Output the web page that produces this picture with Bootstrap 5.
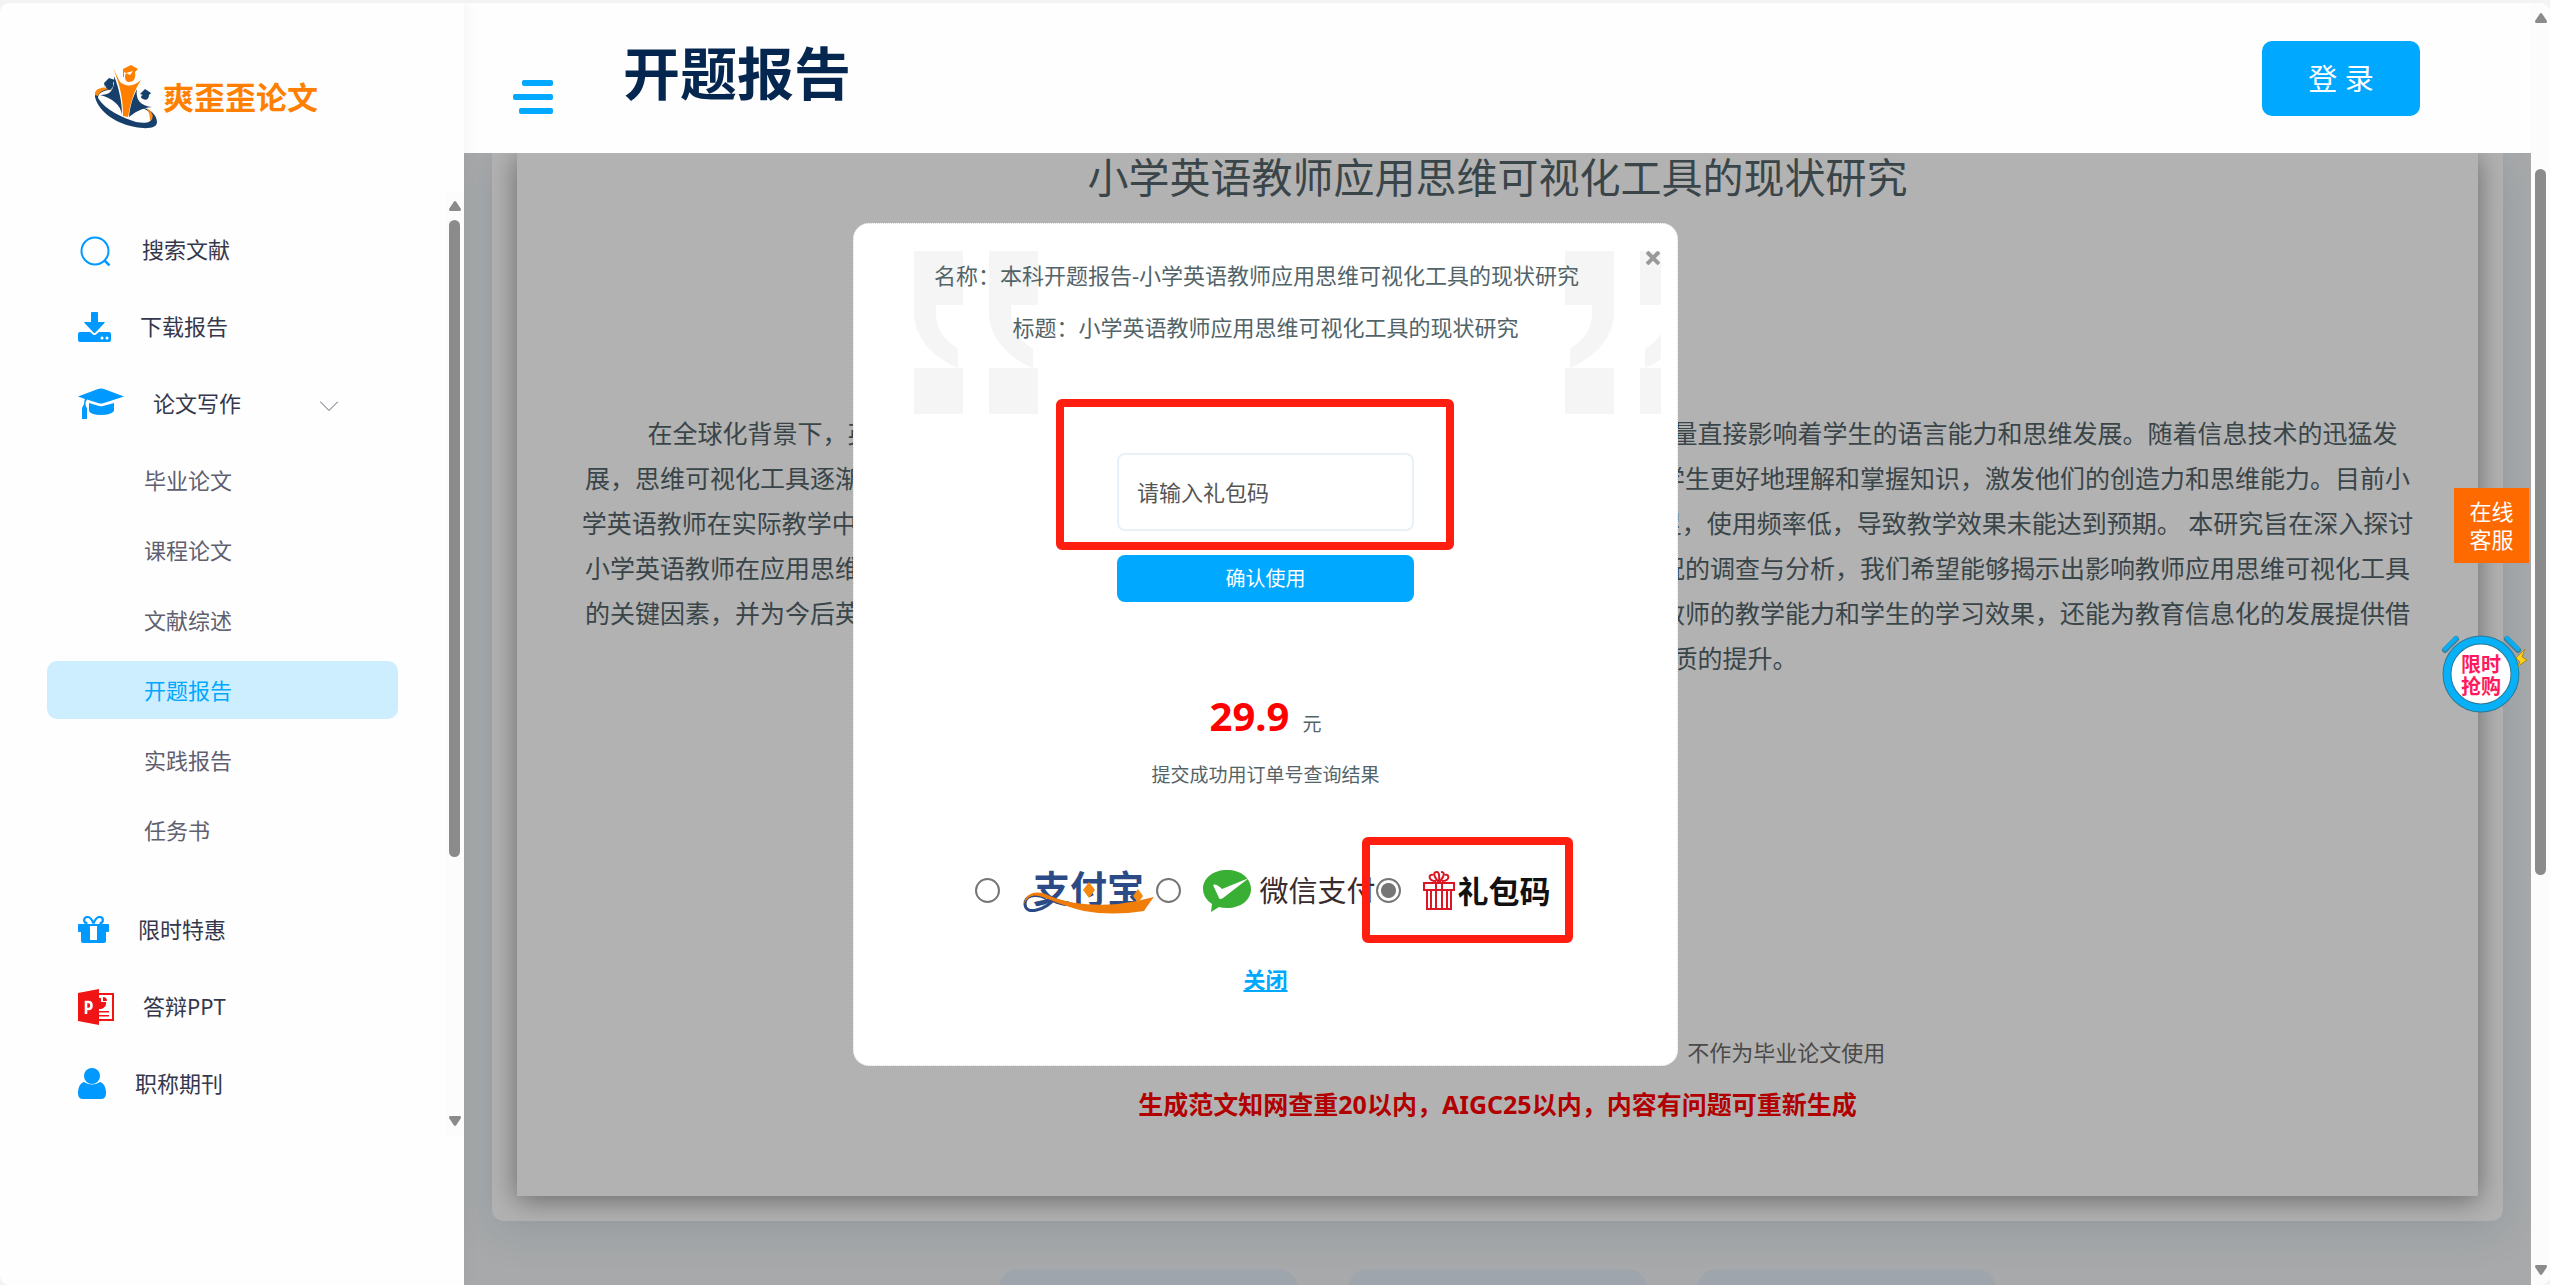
<!DOCTYPE html>
<html lang="zh-CN">
<head>
<meta charset="utf-8">
<meta name="viewport" content="width=device-width, initial-scale=1">
<title>开题报告</title>
<link href="https://cdn.jsdelivr.net/npm/bootstrap@5.3.0/dist/css/bootstrap.min.css" rel="stylesheet">
<style>
:root { --brand: #00a8ff; --icon: #0099ff; --ink: #536469; --alert: #ff1e10; }
body { font-family: "Noto Sans", "Noto Sans CJK SC", sans-serif; font-size: 22px; color: var(--ink); background: #f3f3f3; }
.shell { height: 100vh; padding-top: 3px; }
.frame { background: #fff; border-radius: 10px; }

/* sidebar */
.side { width: 464px; z-index: 2; background: #fefefe; box-shadow: 0 0 16px rgba(0, 0, 0, .06); }
.side-brand { height: 188px; padding: 62px 0 0 95px; }
.brand-name { color: #ff8000; font-size: 31px; line-height: 64px; }
.side-menu { padding-top: 20px; }
.menu-row { height: 77px; padding-left: 78px; gap: 29px; color: #35384c; }
.menu-row svg { color: var(--icon); }
.menu-caret { margin-right: 107px; }
.sub-menu { padding: 9px 47px 32px; }
.sub-list { gap: 12px; }
.sub-row { height: 58px; line-height: 58px; padding-left: 97px; border-radius: 10px; color: #5e6070; }
.sub-row.current { background: #cceeff; color: var(--brand); }
.bar-track { width: 19px; background: #fcfcfc; padding: 10px 0; }
.side .bar-track { height: 945px; }
.bar-thumb { width: 11px; border-radius: 6px; background: #8b8b8b; margin-top: 9px; }
.side .bar-thumb { height: 637px; }
.page-bar .bar-thumb { height: 706px; margin-top: 146px; }

/* top bar */
.top { height: 150px; background: #fefefe; padding: 0 111px 0 49px; z-index: 1; }
.top-title { font-size: 57px; line-height: 80px; color: #05264e; padding-top: 30px; margin-left: 70px; }
.burger { margin-top: 77px; }
.login { width: 158px; height: 75px; margin-top: 38px; border-radius: 10px; background: var(--brand); font-size: 29px; color: #fff; }

/* report */
.stage { background: #eff2f4; }
.dim { background: rgba(0, 0, 0, .3); }
.sheet { margin: 0 28px; padding: 0 25px 25px; background: #fff; border-radius: 0 0 12px 12px; box-shadow: 0 10px 44px rgba(50, 90, 115, .12); }
.paper { background: #fff; box-shadow: 0 4px 26px rgba(0, 0, 0, .42); padding-bottom: 66px; }
.paper-title { font-size: 41px; line-height: 48px; color: var(--ink); }
.paper-text { font-size: 25px; line-height: 45px; text-indent: 2em; margin: 210px 0 345px; white-space: nowrap; }
.paper-note { line-height: 52px; color: #6b6b6b; }
.paper-warn { font-size: 25px; line-height: 52px; color: #f00; }
.tiles { gap: 50px; margin-top: 48px; }
.tile { width: 299px; height: 160px; border-radius: 20px; background: #e4ecf8; }

/* dialog */
.veil { inset: 3px 19px 0 0; z-index: 5; }
.dialog-box { width: 825px; height: 843px; background: #fff; border: 1px dotted #ddd; border-radius: 16px; padding-top: 25px; }
.quote-l { left: 60px; top: 27px; }
.quote-r { right: 16px; top: 27px; }
.dialog-line { line-height: 52px; }
.dialog-line.first { padding-right: 18px; }
.close-x { right: 13px; top: 23px; width: 22px; height: 22px; color: #999; }
.gift-form { margin-top: 100px; gap: 24px; width: 297px; }
.gift-input { height: 78px; border: 2px solid #e9f1f8; border-radius: 8px; padding: 2px 18px; font-size: 22px; color: #555; background: #fff; }
.gift-input::placeholder { color: #555; opacity: 1; }
.gift-btn { height: 47px; border-radius: 8px; background: var(--brand); color: #fff; font-size: 20px; }
.gift-btn.btn { padding: 2px 0 0; }
.price-row { margin-top: 84px; line-height: 60px; font-size: 19px; gap: 13px; }
.price { font-size: 40px; color: #f00; }
.hint { font-size: 19px; line-height: 40px; margin-top: 1px; }
.pay-row { margin-top: 65px; height: 62px; }
.pay-radio { appearance: none; width: 25px; height: 25px; border: 2px solid #767676; border-radius: 50%; margin: 0; flex: none; background: #fff; }
.pay-radio:checked { background: radial-gradient(circle, #767676 0 7px, #fff 8px); }
.pay-opt { width: 181px; height: 62px; }
.pay-opt.wide { width: 220px; }
.pay-logo { padding-left: 22px; white-space: nowrap; }
.wx-name { font-size: 29px; line-height: 44px; color: #3a2b2c; margin-left: 9px; }
.gift-name { font-size: 31px; line-height: 44px; color: #111; margin-left: 3px; }
.close-link { line-height: 40px; margin-top: 37px; color: var(--brand); }
.mark-box { border: 8px solid var(--alert); border-radius: 6px; pointer-events: none; }
.mark-code { left: 202px; top: 175px; width: 398px; height: 151px; }
.mark-pay { left: 508px; top: 613px; width: 211px; height: 106px; }

/* floating buttons */
.floats { right: 19px; top: 488px; z-index: 4; }
.service { width: 75px; height: 75px; background: #ff6a00; color: #fff; line-height: 28px; padding: 9px 0; }
.sale { margin: 68px 0 0 -13px; width: 90px; height: 84px; }
.sale-text { inset: 23px 0 0 3px; width: 74px; font-size: 20px; line-height: 22px; color: #ff1a5e; }
</style>
<script src="https://cdn.jsdelivr.net/npm/bootstrap@5.3.0/dist/js/bootstrap.bundle.min.js"></script>
</head>
<body>
<div class="shell overflow-hidden position-relative">
<div class="frame d-flex h-100 overflow-hidden">

  <aside class="side flex-shrink-0 position-relative">
    <a href="#" class="side-brand d-flex gap-1 text-decoration-none">
      <svg width="64" height="64" viewBox="0 0 64 64" aria-hidden="true">
        <path fill-rule="evenodd" d="M0 32C-1 25 8 21 19 25C10 24 3 28 3 33C10 45 28 53 41 57C52 59 59 57 56 50C53 45 49 43 45 43C54 42 62 50 62 57C62 64 50 64 40 62C23 59 4 48 0 32Z" fill="#16406b"/>
        <path d="M0 30C-1 23 10 20 20 25C12 23 5 26 3 31Z" fill="#ff8a10"/>
        <path d="M51 43C58 46 60 53 55 56C55 50 54 47 51 43Z" fill="#ff8a10"/>
        <path d="M18 3L25 17C31 22 38 22 46 15C40 24 36 35 33 52L28 51C28 36 26 22 18 3Z" fill="#ff8000"/>
        <path d="M19 11C24 23 27 37 27 50C26 40 17 33 5 30C14 30 20 27 19 11Z" fill="#16406b"/>
        <path d="M42 24C40 35 46 41 57 42C46 43 39 48 34 52C35 42 37 34 42 24Z" fill="#16406b"/>
        <path d="M28 4L36 0L43 4L40 7C41 13 39 17 34 17C30 17 29 12 31 8L29 7V12H28Z" fill="#ff8000"/>
        <path d="M31 8L38 6L35 10Z" fill="#fff"/>
        <path d="M9 18L14 13L20 15L18 18C19 23 16 25 13 24C10 23 11 20 12 19L10 22Z" fill="#16406b"/>
        <path d="M45 29L50 24L56 28L54 30C54 34 51 36 48 34C45 33 46 30 48 30Z" fill="#16406b"/>
      </svg>
      <span class="brand-name fw-bold">爽歪歪论文</span>
    </a>
    <div class="d-flex">
      <nav class="side-menu flex-grow-1">
        <a href="#" class="menu-row d-flex align-items-center text-decoration-none">
          <svg width="35" height="32" viewBox="0 0 35 32" fill="none" stroke="currentColor" stroke-width="2"><circle cx="17" cy="17" r="13.5"/><path d="M26 26L31.500 31.500" stroke-width="2.500"/></svg>搜索文献</a>
        <a href="#" class="menu-row d-flex align-items-center text-decoration-none">
          <svg width="33" height="30" viewBox="0 0 33 30" fill="currentColor"><path d="M13 1q0-1 1-1h5q1 0 1 1v9h6q1.500 0 .5 1L17.500 20.500q-1 1-2 0L6.500 11q-1-1 .5-1h6z"/><path d="M0 22q0-2 2-2h10l3 2.500q1.500 1 3 0L21 20h10q2 0 2 2v6q0 2-2 2H2q-2 0-2-2z"/><circle cx="24" cy="26" r="1.500" fill="#fff"/><circle cx="29" cy="26" r="1.500" fill="#fff"/></svg>下载报告</a>
        <a href="#writing" class="menu-row d-flex align-items-center text-decoration-none" data-bs-toggle="collapse" aria-expanded="true">
          <svg width="46" height="32" viewBox="0 0 46 32" fill="currentColor"><path d="M0 8.500L20 1q3-1 6 0l20 7.500L26 15q-3 1-6 0L9 11.500Q7.500 13 7.500 17L9 20.500V31H4V20L6 16q0-3 1-5z"/><path d="M11 15l10 3q2 .5 4 0l11-3v8q-3 4-13 4t-12-4z"/></svg>论文写作
          <svg class="menu-caret ms-auto" width="18" height="14" viewBox="0 0 18 14" fill="none" stroke="#5e6070"><path d="M0 4.500l9 9 9-9"/></svg></a>
        <div class="sub-menu collapse show" id="writing"><div class="sub-list d-flex flex-column">
          <a href="#" class="sub-row text-decoration-none">毕业论文</a>
          <a href="#" class="sub-row text-decoration-none">课程论文</a>
          <a href="#" class="sub-row text-decoration-none">文献综述</a>
          <a href="#" class="sub-row current text-decoration-none" aria-current="page">开题报告</a>
          <a href="#" class="sub-row text-decoration-none">实践报告</a>
          <a href="#" class="sub-row text-decoration-none">任务书</a>
        </div></div>
        <a href="#" class="menu-row d-flex align-items-center text-decoration-none">
          <svg width="31" height="27" viewBox="0 0 31 27" fill="currentColor"><path fill-rule="evenodd" d="M1 8h29q1 0 1 1v6q0 1-1 1h-2v9q0 2-2 2H5q-2 0-2-2v-9H1q-1 0-1-1V9q0-1 1-1zM12 10v14h7V10z"/><path d="M15.500 7.500C13 1 11 1 9.500 1C5 1 5 7 9.500 7.500M15.500 7.500C18 1 20 1 21.500 1C26 1 26 7 21.500 7.500" fill="none" stroke="currentColor" stroke-width="2.200"/></svg>限时特惠</a>
        <a href="#" class="menu-row d-flex align-items-center text-decoration-none">
          <svg width="36" height="36" viewBox="0 0 36 36"><path d="M20 5h15v26H20z" fill="#fff" stroke="#f01414" stroke-width="2"/><path d="M0 4L21 0v36L0 32z" fill="#f01414"/><path d="M21 9a6 6 0 1 0 0 11 6 6 0 0 0 7-7h-5V9z" fill="#f01414"/><path d="M25 8v4h4q0-4-4-4zM21 22h10v1.500H21zM21 26h10v1.500H21z" fill="#f01414"/><path d="M8 25V13h2.500q3 0 3 3.500t-3 3.500H8" fill="none" stroke="#fff" stroke-width="2.600"/></svg>答辩PPT</a>
        <a href="#" class="menu-row d-flex align-items-center text-decoration-none">
          <svg width="28" height="31" viewBox="0 0 28 31" fill="currentColor"><circle cx="14" cy="8" r="8"/><path d="M6 14q8 5 16 0c4 1 6 6 6 11q0 6-5 6H5q-5 0-5-6c0-5 2-10 6-11z"/></svg>职称期刊</a>
      </nav>
      <div class="bar-track d-flex flex-column align-items-center">
        <svg width="12" height="10" fill="#8b8b8b"><path d="M6 0q1 0 2 2l4 6q0 2-1 2H1q-1 0-1-2l4-6q1-2 2-2z"/></svg>
        <div class="bar-thumb"></div>
        <svg class="mt-auto" width="12" height="10" fill="#8b8b8b"><path d="M6 10q-1 0-2-2L0 2q0-2 1-2h10q1 0 1 2L8 8q-1 2-2 2z"/></svg>
      </div>
    </div>
  </aside>

  <div class="flex-grow-1 d-flex flex-column">
    <header class="top d-flex align-items-start flex-shrink-0">
      <button type="button" class="burger btn p-0 border-0 lh-1" aria-label="菜单">
        <svg class="d-block" width="40" height="34" fill="#00a8ff"><rect x="9" width="31" height="6" rx="2"/><rect y="14" width="40" height="6" rx="2"/><rect x="6" y="28" width="34" height="6" rx="2"/></svg>
      </button>
      <h1 class="top-title fw-bold mb-0">开题报告</h1>
      <button type="button" class="login btn ms-auto">登 录</button>
    </header>
    <main class="stage flex-grow-1 position-relative overflow-hidden">
      <section class="sheet">
        <article class="paper text-center">
          <h2 class="paper-title fw-normal mb-0">小学英语教师应用思维可视化工具的现状研究</h2>
          <p class="paper-text">在全球化背景下，英语作为通用的语言，在基础教育中的地位日益重要，而小学英语教学的质量直接影响着学生的语言能力和思维发展。随着信息技术的迅猛发<br>展，思维可视化工具逐渐成为课堂教学中的重要辅助手段，能够将抽象的思维过程直观呈现，帮助学生更好地理解和掌握知识，激发他们的创造力和思维能力。目前小<br>学英语教师在实际教学中对思维可视化工具的应用仍存在诸多问题，例如认识不深入，操作技能不足，使用频率低，导致教学效果未能达到预期。 本研究旨在深入探讨<br>小学英语教师在应用思维可视化工具方面的现状，分析其存在问题与困难。通过对一线教师使用情况的调查与分析，我们希望能够揭示出影响教师应用思维可视化工具<br>的关键因素，并为今后英语教学的改进提供切实可行的建议与策略。这项研究不仅有助于提升小学教师的教学能力和学生的学习效果，还能为教育信息化的发展提供借<br>鉴，促进小学英语课堂教学的改革与整体素质的提升。</p>
          <p class="paper-note mb-0">温馨提示： 以上生成的范文内容仅供学习参考与格式借鉴，不作为毕业论文使用</p>
          <p class="paper-warn fw-bold mb-0">生成范文知网查重20以内，AIGC25以内，内容有问题可重新生成</p>
        </article>
      </section>
      <div class="tiles d-flex justify-content-center">
        <div class="tile"></div><div class="tile"></div><div class="tile"></div>
      </div>
      <div class="dim position-absolute top-0 start-0 w-100 h-100"></div>
    </main>
  </div>

  <div class="bar-track page-bar flex-shrink-0 d-flex flex-column align-items-center">
    <svg width="12" height="10" fill="#8b8b8b"><path d="M6 0q1 0 2 2l4 6q0 2-1 2H1q-1 0-1-2l4-6q1-2 2-2z"/></svg>
    <div class="bar-thumb"></div>
    <svg class="mt-auto" width="12" height="10" fill="#8b8b8b"><path d="M6 10q-1 0-2-2L0 2q0-2 1-2h10q1 0 1 2L8 8q-1 2-2 2z"/></svg>
  </div>
</div>

<div class="floats position-absolute">
  <a href="#" class="service d-block text-center text-decoration-none">在线<br>客服</a>
  <a href="#" class="sale d-block position-relative text-decoration-none">
    <svg class="d-block" width="90" height="84" viewBox="0 0 90 84"><g stroke="#3b7f9b"><path d="M4 19L15 8" stroke-width="6" stroke-linecap="round"/><path d="M66 8L77 19" stroke-width="6" stroke-linecap="round"/></g><g stroke="#07aef5" stroke-width="4" stroke-linecap="round"><path d="M4 18L15 7M66 7L77 18"/></g>
      <circle cx="40" cy="43" r="34" fill="#fff" stroke="#2f7894" stroke-width="9"/><circle cx="40" cy="43" r="34" fill="none" stroke="#07b0f7" stroke-width="7"/>
      <path d="M84 18L75 27L79 31L76 36L86 29L81 26Z" fill="#ffd21a" stroke="#a88a20"/></svg>
    <span class="sale-text position-absolute text-center fw-bold">限时<br>抢购</span>
  </a>
</div>

<div class="veil position-absolute d-flex align-items-center justify-content-center pe-none">
  <div class="dialog-box position-relative pe-auto" role="dialog" aria-label="支付">
    <svg class="quote-l position-absolute" width="125" height="164" fill="#f5f5f5"><g id="q"><path d="M0 0h49v54H22v8c0 16 8 26 22 36v19C22 108 0 88 0 62z"/><path d="M0 117h49v46H0z"/></g><use href="#q" x="75"/></svg>
    <svg class="quote-r position-absolute" width="96" height="164" fill="#f5f5f5"><use href="#q" transform="matrix(-1 0 0 1 49 0)"/><use href="#q" transform="matrix(-1 0 0 1 124 0)"/></svg>
    <button type="button" class="close-x btn p-0 border-0 position-absolute lh-1" aria-label="关闭窗口"><svg class="d-block mx-auto" width="14" height="14" viewBox="0 0 14 14" stroke="#999" stroke-width="4"><path d="M1 1l12 12M13 1L1 13"/></svg></button>
    <div class="position-relative d-flex flex-column align-items-center">
      <p class="dialog-line first mb-0">名称：本科开题报告-小学英语教师应用思维可视化工具的现状研究</p>
      <p class="dialog-line mb-0">标题：小学英语教师应用思维可视化工具的现状研究</p>
      <form class="gift-form d-flex flex-column">
        <input type="text" class="gift-input w-100" placeholder="请输入礼包码" aria-label="礼包码">
        <button type="button" class="gift-btn btn w-100">确认使用</button>
      </form>
      <div class="price-row d-flex align-items-baseline"><strong class="price">29.9</strong><span>元</span></div>
      <p class="hint mb-0">提交成功用订单号查询结果</p>
      <div class="pay-row d-flex">
        <label class="pay-opt d-flex align-items-center"><input type="radio" name="pay" class="pay-radio">
          <span class="pay-logo"><svg class="d-block" width="134" height="48" viewBox="0 0 134 48">
            <text x="11" y="36" font-size="37" font-weight="700" fill="#2c4a86" font-family="'Noto Sans CJK SC',sans-serif">支付宝</text>
            <path d="M33 31C24 43 3 49 3 37C3 29 12 26 24 31" fill="none" stroke="#2c4a86" stroke-width="3"/>
            <path d="M2 37C3 26 15 22 28 29C48 37 70 39 96 37Q114 35 132 30Q128 35 122 44Q90 49 62 44C40 39 26 31 17 29C9 27 5 31 2 37Z" fill="#f07d0a"/>
            <path d="M67 15l6 8-6 8-6-8zM116 22l5 7-5 7-5-7z" fill="#f58a12"/></svg></span></label>
        <label class="pay-opt wide d-flex align-items-center"><input type="radio" name="pay" class="pay-radio">
          <span class="pay-logo d-flex align-items-center"><svg width="48" height="42" viewBox="0 0 48 42"><path d="M24 0C38 0 48 8 48 19S38 38 24 38Q19 38 16 37L8 42L9 34Q0 28 0 19C0 8 10 0 24 0Z" fill="#39b034"/><path d="M10 15q3-2 9 4l27-11L20 28q-3 2-4 0z" fill="#fff"/></svg><span class="wx-name">微信支付</span></span></label>
        <label class="pay-opt d-flex align-items-center"><input type="radio" name="pay" class="pay-radio" checked>
          <span class="pay-logo d-flex align-items-center"><svg width="32" height="40" viewBox="0 0 32 40" fill="none" stroke="#dc1622" stroke-width="2"><path d="M1 12h30v7H1zM4 19v19h24V19M13 12v26M19 12v26M16 12C10 4 10 1 14 1q3 0 2 11M16 12C22 4 22 1 18 1M13 10C4 10 6 2 10 4M19 10c9 0 7-8 3-6M8 19v19M24 19v19"/></svg><span class="gift-name fw-bold">礼包码</span></span></label>
      </div>
      <a href="#" class="close-link fw-bold">关闭</a>
    </div>
    <div class="mark-box mark-code position-absolute"></div>
    <div class="mark-box mark-pay position-absolute"></div>
  </div>
</div>
</div>
</body>
</html>
